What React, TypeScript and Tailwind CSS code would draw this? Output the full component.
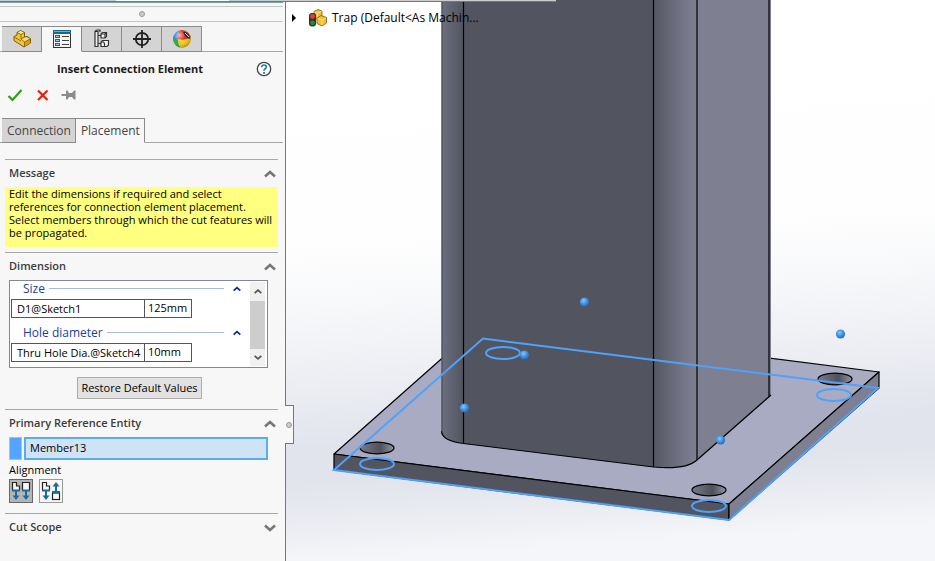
import { useState, type ReactNode } from "react";
import clsx from "clsx";

function Chevron({ className, down }: { className?: string; down?: boolean }) {
  return (
    <svg className={className} viewBox="0 0 12 8" fill="none" stroke="currentColor" strokeWidth={2.6}>
      <path d={down ? "M1 1.5L6 6L11 1.5" : "M1 6.5L6 2L11 6.5"} />
    </svg>
  );
}

function PartIcon() {
  return (
    <svg className="w-5 h-5" viewBox="0 0 20 20" strokeLinejoin="round">
      <path d="M2 7.500L5 6V3.500L8.500 1.500L12.500 3.500V8L15 7.500L18.500 9.500V14L12 18L2 11.500Z" fill="#f4c531" stroke="#7a5a08" />
      <path d="M5.500 3.500L8.500 2L12 3.500L9 5.500Z" fill="#fde98c" />
      <path d="M9 10.500L13.500 8.500L18 10L12.500 13Z" fill="#fbe07a" />
      <path d="M12.500 13L18 10V14L12.500 17.500Z" fill="#d99f14" />
      <path d="M5 3.500L9 5.500V10L12.500 13V17.500M12.500 13L18 10M9 5.500L12.500 3.500M9 10L12.500 8M2 8L9 12" fill="none" stroke="#7a5a08" strokeWidth={0.8} />
    </svg>
  );
}

function PropertyIcon() {
  return (
    <svg className="w-5 h-5" viewBox="0 0 20 20">
      <rect x="1.500" y="1.500" width="17" height="17" fill="#f7f7f7" stroke="#333" />
      <rect x="1" y="1" width="18" height="4" fill="#17678f" />
      <path d="M2 2.500H18" stroke="#69aecd" />
      <path d="M3 7.500H8M3 11.500H8M3 15.500H8" stroke="#17678f" strokeWidth={3} />
      <path d="M4 7.500H7M4 11.500H7M4 15.500H7" stroke="#a4cde2" />
      <path d="M10 7.500H17M10 11.500H17M10 15.500H17" stroke="#444" />
    </svg>
  );
}

function ConfigIcon() {
  return (
    <svg className="w-5 h-5" viewBox="0 0 20 20" fill="none" stroke="#333" strokeWidth={1.2}>
      <path d="M3 2.500H6V17.500H3Z" fill="#eee" />
      <path d="M6 6.500H9M6 14.500H9M3 2L5 1H8V3" />
      <path d="M9 5L10.500 3.500H14.500V7.500L13 9H9ZM9 13L10.500 11.500H16.500V16L15 17.500H9Z" fill="#f4f4f4" />
      <path d="M9 5H13V9M13 5L14.500 3.500M9 13H11.500L12.500 14.500V17.500" />
    </svg>
  );
}

function TargetIcon() {
  return (
    <svg className="w-5 h-5" viewBox="0 0 20 20" fill="none" stroke="#222" strokeWidth={1.800}>
      <circle cx="10" cy="10" r="6.200" />
      <path d="M10 1V19M1 10H19" />
    </svg>
  );
}

function AppearanceIcon() {
  return (
    <svg className="w-5 h-5" viewBox="0 0 20 20">
      <defs>
        <clipPath id="ball">
          <circle cx="10" cy="10" r="9" />
        </clipPath>
        <radialGradient id="gloss" cx="35%" cy="30%" r="75%">
          <stop offset="0" stopColor="#fff" stopOpacity=".65" />
          <stop offset=".45" stopColor="#fff" stopOpacity="0" />
          <stop offset="1" stopColor="#000" stopOpacity=".35" />
        </radialGradient>
      </defs>
      <g clipPath="url(#ball)">
        <path d="M0 0H9Q5 4 6 10L0 12Z" fill="#2f7fd8" />
        <path d="M7 0H20V11H6Q5 4 9 0Z" fill="#dc2a20" />
        <path d="M0 11L6 9.500Q6 15 9 20H0Z" fill="#2eab35" />
        <path d="M6 10Q13 12 20 8V20H9Q6 16 6 10Z" fill="#f5cf1c" />
        <path d="M11 3Q17 2 18 10Q14 10 11 3Z" fill="#1d1d1d" />
        <path d="M13 4L17 8" stroke="#ddd" />
        <circle cx="10" cy="10" r="9" fill="url(#gloss)" />
      </g>
    </svg>
  );
}

function AssemblyIcon() {
  return (
    <svg className="w-5 h-5" viewBox="0 0 20 20" strokeLinejoin="round">
      <path d="M6 3.500L10 1.500L14 3V9L9 11L6 9.500Z" fill="#f1c232" stroke="#7a5a08" strokeWidth={0.8} />
      <path d="M6.500 4L9.500 5.200L13.500 3.200M9.500 5V10" fill="none" stroke="#fbe58a" />
      <path d="M9 10L13 7.500L18.500 9.500V15L14 18L9 15.500Z" fill="#f1c232" stroke="#7a5a08" strokeWidth={0.8} />
      <path d="M9.500 10.500L14 12L18 10M14 12V17" fill="none" stroke="#fbe58a" />
      <rect x="1" y="5" width="7" height="13.500" rx="3" fill="#333" />
      <circle cx="4.500" cy="8.500" r="2.400" fill="#ee3c32" />
      <circle cx="4.500" cy="14.800" r="2.400" fill="#1d8f3c" />
    </svg>
  );
}

function AlignIcon({ flipped }: { flipped?: boolean }) {
  return (
    <svg className="w-5 h-5" viewBox="0 0 20 20" fill="none">
      <path d="M1.500 9V1.500H5.500V5H8.500V9" fill="#f7f7f7" stroke="#222" strokeWidth={1.2} />
      <path d="M1 9.500H9M5 9V15" stroke="#1b6d96" strokeWidth={2} />
      <path d="M1.500 14.500H8.500L5 19Z" fill="#1b6d96" />
      {flipped ? (
        <>
          <rect x="11.500" y="12" width="7" height="6.500" fill="#fff" stroke="#222" strokeWidth={1.2} />
          <path d="M11 11H19M15 11V5" stroke="#1b6d96" strokeWidth={2} />
          <path d="M11.500 5.500H18.500L15 1Z" fill="#1b6d96" />
        </>
      ) : (
        <>
          <path d="M11.500 9V1.500H18.500V9" fill="#f7f7f7" stroke="#222" strokeWidth={1.2} />
          <path d="M11 9.500H19M15 9V15" stroke="#1b6d96" strokeWidth={2} />
          <path d="M11.500 14.500H18.500L15 19Z" fill="#1b6d96" />
        </>
      )}
    </svg>
  );
}

const managerTabs = [
  { label: "Feature tree", icon: <PartIcon /> },
  { label: "Properties", icon: <PropertyIcon /> },
  { label: "Configurations", icon: <ConfigIcon /> },
  { label: "Dimensions", icon: <TargetIcon /> },
  { label: "Appearances", icon: <AppearanceIcon /> },
];

const dimensions = [
  { group: "Size", name: "D1@Sketch1", value: "125mm" },
  { group: "Hole diameter", name: "Thru Hole Dia.@Sketch4", value: "10mm" },
];

function Section({ title, closed, children }: { title: string; closed?: boolean; children?: ReactNode }) {
  const [open, setOpen] = useState(!closed);
  return (
    <section className="border-t border-[#a8a8a8] ml-[5px] mr-[7px]">
      <button
        className="flex w-full items-center justify-between h-[27px] pl-1 pr-0.5 text-[11px] font-semibold text-[#3c3c3c]"
        aria-expanded={open}
        onClick={() => setOpen(!open)}
      >
        {title}
        <Chevron className="w-3 h-2 text-[#777]" down={!open} />
      </button>
      {open && children}
    </section>
  );
}

function Panel() {
  const [tab, setTab] = useState("Properties");
  const [page, setPage] = useState("Placement");
  const [flipped, setFlipped] = useState(false);

  return (
    <aside className="relative z-10 w-[286px] shrink-0 border-r border-[#777] bg-[#f7f7f7]">
      {/* Grip */}
      <div className="pt-0.5 pr-0.5">
        <div className="h-[5px] border-t border-t-[#6fa8a8] border-b border-b-[#c4c4c4]" />
        <div className="flex h-[15px] items-center justify-center border-b border-[#c4c4c4]">
          <span className="w-1.5 h-1.5 rounded-full border border-[#999] bg-[#ccc]" />
        </div>
      </div>

      {/* Manager tabs */}
      <div className="flex mt-1 pl-0.5 mr-0.5 border-b border-[#a8a8a8]">
        {managerTabs.map(({ label, icon }) => (
          <button
            key={label}
            aria-label={label}
            onClick={() => setTab(label)}
            className={clsx(
              "flex w-10 h-[26px] -mb-px items-center justify-center border-t border-r border-b border-[#8a8a8a]",
              tab === label ? "bg-[#f7f7f7] border-b-[#f7f7f7]" : "bg-[#d4d4d4]"
            )}
          >
            {icon}
          </button>
        ))}
      </div>

      <div className="flex h-[34px] items-center">
        <h1 className="flex-1 pl-1 text-center text-[11px] font-bold text-[#1c1c1c]">Insert Connection Element</h1>
        <button aria-label="Help" className="mr-[13px]">
          <svg className="w-4 h-4" viewBox="0 0 16 16" fill="none">
            <circle cx="8" cy="8" r="6.700" fill="#fff" stroke="#444" strokeWidth={1.3} />
            <path d="M5.700 6.200Q5.800 4 8 4Q10.300 4 10.300 6Q10.300 7.200 9 8Q8 8.600 8 9.800" stroke="#1b7fae" strokeWidth={1.700} />
            <path d="M7.100 11H9V12.700H7.100Z" fill="#1b7fae" />
          </svg>
        </button>
      </div>

      <div className="flex h-[18px] items-center gap-3 pl-[7px]">
        <button aria-label="OK">
          <svg className="w-4 h-4" viewBox="0 0 16 16" fill="none" stroke="#2f9e0b" strokeWidth={2.2}>
            <path d="M1.500 9L5.500 13L14.500 3" />
          </svg>
        </button>
        <button aria-label="Cancel">
          <svg className="w-4 h-4" viewBox="0 0 16 16" fill="none" stroke="#e32208" strokeWidth={2.2}>
            <path d="M3 3.500L12.500 13M12.500 3.500L3 13" />
          </svg>
        </button>
        <button aria-label="Keep visible" className="-ml-0.5">
          <svg className="w-4 h-4" viewBox="0 0 16 16" fill="#8c8c8c">
            <path d="M0.500 7H5V3.500H6.500L8 6H11L13 3.500H14.500V12.500H13L11 10H8L6.500 12.500H5V9H0.500Z" />
          </svg>
        </button>
      </div>

      {/* Page tabs */}
      <div className="flex mt-[14px] mb-4 pl-0.5 mr-0.5 border-b border-[#a8a8a8]">
        {["Connection", "Placement"].map((name) => (
          <button
            key={name}
            onClick={() => setPage(name)}
            className={clsx(
              "h-[25px] -mb-px pl-[5px] pr-1 border-t border-r border-b border-[#8a8a8a] text-xs text-[#444]",
              page === name ? "bg-[#f7f7f7] border-b-[#f7f7f7]" : "bg-[#d4d4d4]"
            )}
          >
            {name}
          </button>
        ))}
      </div>

      <Section title="Message">
        <p className="h-[60px] mb-[5px] pl-1 bg-[#ffff80] text-[11px] leading-[13px]">
          Edit the dimensions if required and select references for connection element placement. Select members
          through which the cut features will be propagated.
        </p>
      </Section>

      <Section title="Dimension">
        <div className="flex ml-1 mr-2.5 h-[88px] border border-[#828790] bg-white pt-px pr-0.5 pb-px">
          <div className="flex-1 pl-px">
            {dimensions.map(({ group, name, value }) => (
              <div key={group} className="h-11">
                <div className="flex h-[13px] mb-1 items-center pl-3 pr-[9px] text-xs text-[#1c3f9c]">
                  {group}
                  <span className="flex-1 h-px ml-1 mr-[9px] bg-[#a9bcdc]" />
                  <Chevron className="w-2 h-1.5 text-[#062f8c]" />
                </div>
                <label className="flex w-[181px] h-[19px] border border-[#555] text-[11px] items-center">
                  <span className="w-[133px] h-full pl-[5px] leading-[17px] border-r border-[#555] whitespace-nowrap">{name}</span>
                  <input className="w-[45px] pl-[3px] outline-none" defaultValue={value} />
                </label>
              </div>
            ))}
          </div>
          <div className="flex w-[15px] flex-col items-center bg-[#f0f0f0]">
            <Chevron className="w-2 h-[19px] text-[#555]" />
            <span className="w-full flex-1 bg-[#cdcdcd]" />
            <Chevron className="w-2 h-[17px] text-[#555]" down />
          </div>
        </div>
        <div className="flex justify-center mt-[9px] mb-2.5 pr-1">
          <button className="h-[22px] px-[3px] border border-[#adadad] bg-[#e1e1e1] text-[11px]">Restore Default Values</button>
        </div>
      </Section>

      <Section title="Primary Reference Entity">
        <div className="flex gap-0.5 ml-1 mr-2.5">
          <span className="w-[13px] border border-[#9cc3ea] bg-[#55a5ff]" />
          <input
            aria-label="Primary reference"
            className="flex-1 min-w-0 h-[23px] px-1 pb-0.5 border-2 border-[#5aaee4] bg-[#cfe3f7] text-[11px] outline-none"
            defaultValue="Member13"
          />
        </div>
        <div className="mt-0.5 ml-1 text-[11px] leading-[16px]">Alignment</div>
        <div className="flex gap-1.5 mt-px ml-1 mb-[10px]">
          {[false, true].map((value) => (
            <button
              key={String(value)}
              aria-label={value ? "Anti-aligned" : "Aligned"}
              aria-pressed={flipped === value}
              onClick={() => setFlipped(value)}
              className={clsx(
                "flex w-6 h-6 items-center justify-center border",
                flipped === value ? "border-[#666] bg-[#b5b5b5]" : "border-[#999] bg-[#f7f7f7]"
              )}
            >
              <AlignIcon flipped={value} />
            </button>
          ))}
        </div>
      </Section>

      <Section title="Cut Scope" closed />

      {/* Splitter handle */}
      <div className="absolute -right-[9px] top-[405px] flex w-[9px] h-[39px] items-center justify-center border border-l-0 border-[#777] bg-[#f7f7f7]">
        <span className="w-1.5 h-1.5 rounded-full border border-[#999] bg-[#ccc]" />
      </div>
    </aside>
  );
}

const holes = [
  [377, 448],
  [709, 490],
  [835, 379],
];
const holeOutlines = [
  [377, 464],
  [709, 506],
  [834, 395],
  [503, 353],
];
const handles = [
  [584, 302],
  [840, 334],
  [524, 355],
  [464, 408],
  [720, 440],
];

function Model() {
  return (
    <svg className="absolute inset-0 w-full h-full" viewBox="286 0 649 561" preserveAspectRatio="xMinYMin slice">
      <defs>
        <linearGradient id="sky" gradientUnits="userSpaceOnUse" x1="286" y1="0" x2="320" y2="561">
          <stop offset="0" stopColor="#fff" />
          <stop offset=".44" stopColor="#fefefe" />
          <stop offset=".55" stopColor="#f7f8fa" />
          <stop offset=".68" stopColor="#edeef3" />
          <stop offset=".8" stopColor="#e1e4ed" />
          <stop offset=".86" stopColor="#e1e4ec" />
          <stop offset=".94" stopColor="#ebedf2" />
          <stop offset="1" stopColor="#f5f6f9" />
        </linearGradient>
        <linearGradient id="leftRound">
          <stop offset="0" stopColor="#6c6f80" />
          <stop offset="1" stopColor="#52545f" />
        </linearGradient>
        <linearGradient id="rightRound">
          <stop offset="0" stopColor="#545661" />
          <stop offset=".7" stopColor="#757788" />
          <stop offset="1" stopColor="#7e8092" />
        </linearGradient>
        <linearGradient id="bore">
          <stop offset="0" stopColor="#777a8b" />
          <stop offset=".6" stopColor="#4e505b" />
          <stop offset="1" stopColor="#9496a8" />
        </linearGradient>
        <radialGradient id="bead" cx="40%" cy="35%" r="65%">
          <stop offset="0" stopColor="#8cc6f8" />
          <stop offset=".5" stopColor="#4796e4" />
          <stop offset="1" stopColor="#246eb5" />
        </radialGradient>
      </defs>
      <rect x="286" width="649" height="561" fill="url(#sky)" />

      {/* Base plate */}
      <g stroke="#000" strokeWidth={1.2} strokeLinejoin="round">
        <path d="M334 454L483 322L879 372L729 504Z" fill="#a8abc2" />
        <path d="M334 454L729 504V520L334 470Z" fill="#52545f" />
        <path d="M729 504L879 372V388L729 520Z" fill="#7e8092" />
        {holes.map(([x, y]) => (
          <ellipse key={x} cx={x} cy={y} rx="17" ry="5.800" fill="url(#bore)" />
        ))}
      </g>

      {/* Column */}
      <path d="M441.500 0H463.500V443.500Q443 441 441.500 433Z" fill="url(#leftRound)" />
      <path d="M463.500 0H653.500V467L463.500 443.500Z" fill="#52545f" />
      <path d="M653.500 0H697V460Q686 470 653.500 467Z" fill="url(#rightRound)" />
      <path d="M697 0H771V395L697 460Z" fill="#7e8092" />
      <g fill="none" stroke="#000" strokeWidth={1.2}>
        <path d="M463.500 0V443.500M653.500 0V467M697 0V460M769 0V397" />
        <path d="M441.500 431Q442 441 463.500 443.500L653.500 467Q686 470 697 460L771 395" />
      </g>
      <path d="M442 0V432" stroke="#444650" />

      {/* Selected face */}
      <g fill="none" stroke="#4ea2fb" strokeWidth={2}>
        <path d="M334 470L483 338.500L878 388L729 520Z" />
        {holeOutlines.map(([x, y]) => (
          <ellipse key={x} cx={x} cy={y} rx="17" ry="6" />
        ))}
      </g>
      {handles.map(([x, y]) => (
        <circle key={x} cx={x + 0.5} cy={y} r="4.600" fill="url(#bead)" />
      ))}
    </svg>
  );
}

export default function App() {
  return (
    <div className="relative flex min-h-screen overflow-hidden bg-white font-['Open_Sans','Noto_Sans',sans-serif] text-black">
      <Panel />
      <main className="relative flex-1">
        <Model />
        <div className="relative flex items-center pt-2 pl-1.5 text-xs">
          <svg className="w-1 h-2 mr-3" viewBox="0 0 4 8">
            <path d="M0 0L4 4L0 8Z" />
          </svg>
          <AssemblyIcon />
          <span className="ml-1">Trap (Default&lt;As Machin...</span>
        </div>
      </main>

      {/* Command bar edge */}
      <div className="absolute z-20 top-0 left-0 flex w-[556px] h-0.5 border-b border-[#777] bg-[#ccc]">
        <span className="w-[116px]" />
        <span className="w-[113px] bg-white" />
      </div>
    </div>
  );
}
